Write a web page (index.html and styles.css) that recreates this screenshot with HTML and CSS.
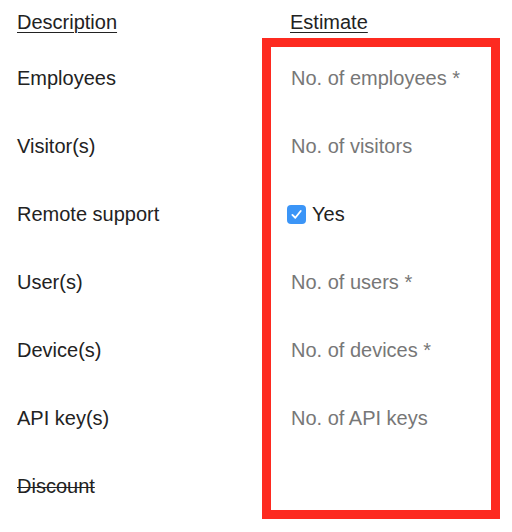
FILE: index.html
```html
<!DOCTYPE html>
<html lang="en">
<head>
  <meta charset="UTF-8">
  <title>Estimate</title>
  <link rel="stylesheet" href="styles.css">
</head>
<body>

  <div class="head">
    <span class="head-cell">Description</span>
    <span class="head-cell">Estimate</span>
  </div>

  <form class="estimate" id="estimateForm">
    <div class="labels">
      <div class="label">Employees</div>
      <div class="label">Visitor(s)</div>
      <div class="label">Remote support</div>
      <div class="label">User(s)</div>
      <div class="label">Device(s)</div>
      <div class="label">API key(s)</div>
      <div class="label struck">Discount</div>
    </div>

    <div class="fields">
      <div class="field"><input type="text" name="employees" placeholder="No. of employees *"></div>
      <div class="field"><input type="text" name="visitors" placeholder="No. of visitors"></div>
      <div class="field">
        <label class="check">
          <span class="check-box">
            <svg width="13" height="13" viewBox="0 0 12 12"><path d="M2.2 6.4 L4.9 9 L9.9 2.8" fill="none" stroke="#fff" stroke-width="1.7" stroke-linecap="round" stroke-linejoin="round"/></svg>
          </span>
          Yes
        </label>
      </div>
      <div class="field"><input type="text" name="users" placeholder="No. of users *"></div>
      <div class="field"><input type="text" name="devices" placeholder="No. of devices *"></div>
      <div class="field"><input type="text" name="apikeys" placeholder="No. of API keys"></div>
    </div>
  </form>

</body>
</html>
```

FILE: styles.css
```css
body {
  margin: 0;
  padding: 0 0 0 17px;
  font-family: 'Liberation Sans', Arial, sans-serif;
  font-size: 20px;
  color: #222;
  background-color: #fff;
}

.head {
  display: grid;
  grid-template-columns: 273px auto;
  padding-top: 11px;
  line-height: 23px;
}

.head-cell {
  text-decoration: underline;
  text-underline-offset: 3px;
  text-decoration-thickness: 1px;
}

.estimate {
  display: flex;
  margin-top: 4px;
}

.labels {
  flex: none;
  width: 245px;
  padding-top: 6px;
}

.label {
  height: 68px;
  line-height: 68px;
}

.struck {
  text-decoration: line-through;
  text-decoration-thickness: 1px;
}

.fields {
  flex: none;
  box-sizing: border-box;
  width: 238px;
  height: 481px;
  border: 9px solid #fd2a20;
}

.field {
  height: 68px;
  display: flex;
  align-items: center;
  padding-left: 16px;
  padding-bottom: 6px;
  box-sizing: border-box;
}

.field input {
  border: none;
  outline: none;
  padding: 0 0 0 4px;
  width: 190px;
  font-family: inherit;
  font-size: 20px;
  color: #222;
  background: transparent;
}

.field input::placeholder {
  color: #777;
}

.check {
  display: flex;
  align-items: center;
  gap: 6px;
  cursor: pointer;
}

.check-box {
  flex: none;
  width: 19px;
  height: 19px;
  border-radius: 4px;
  background-color: #3b95f7;
  display: flex;
  align-items: center;
  justify-content: center;
}
```
